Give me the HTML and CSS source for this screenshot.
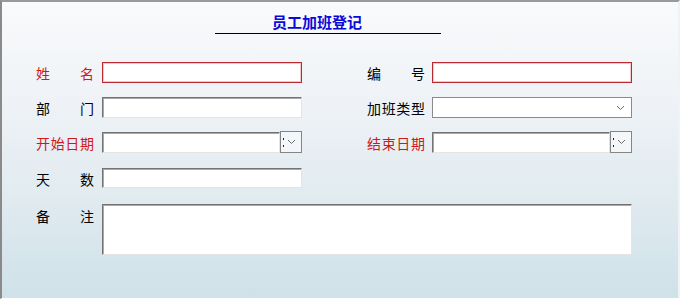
FILE: index.html
```html
<!DOCTYPE html>
<html lang="zh-CN">
<head>
<meta charset="utf-8">
<title>员工加班登记</title>
<link rel="stylesheet" href="styles.css">
</head>
<body>
<div class="window">
  <div class="title">员工加班登记</div>
  <div class="form">
    <label class="lbl req">姓名</label>
    <input class="field req-field" type="text">
    <span></span>
    <label class="lbl">编号</label>
    <input class="field req-field" type="text">

    <label class="lbl">部门</label>
    <input class="field" type="text">
    <span></span>
    <label class="lbl">加班类型</label>
    <div class="select">
      <svg class="chev" width="9" height="6" viewBox="0 0 9 6"><path d="M1 1 L4.5 4.5 L8 1" fill="none" stroke="#6a6a6a" stroke-width="1"/></svg>
    </div>

    <label class="lbl req">开始日期</label>
    <div class="date">
      <input class="field date-input" type="text">
      <div class="date-btn">
        <span class="colon"></span>
        <svg class="chev" width="9" height="6" viewBox="0 0 9 6"><path d="M1 1 L4.5 4.5 L8 1" fill="none" stroke="#6a6a6a" stroke-width="1"/></svg>
      </div>
    </div>
    <span></span>
    <label class="lbl req">结束日期</label>
    <div class="date">
      <input class="field date-input" type="text">
      <div class="date-btn">
        <span class="colon"></span>
        <svg class="chev" width="9" height="6" viewBox="0 0 9 6"><path d="M1 1 L4.5 4.5 L8 1" fill="none" stroke="#6a6a6a" stroke-width="1"/></svg>
      </div>
    </div>

    <label class="lbl">天数</label>
    <input class="field short" type="text">
    <span></span><span></span><span></span>

    <label class="lbl top">备注</label>
    <textarea class="field memo"></textarea>
  </div>
</div>
</body>
</html>
```
FILE: styles.css
```css
html, body {
  margin: 0;
  padding: 0;
}
body {
  font-family: "Noto Sans CJK SC", "Noto Sans", sans-serif;
}
.window {
  box-sizing: border-box;
  width: 680px;
  height: 299px;
  border-top: 2px solid #9a9a9a;
  border-left: 2px solid #8a8a8a;
  border-right: 2px solid #eef3f6;
  border-bottom: 1px solid #ffffff;
  background: linear-gradient(to bottom, #f9fafb 0%, #eef2f6 35%, #e1ebf0 65%, #cfe1e9 100%);
}
.title {
  box-sizing: border-box;
  width: 226px;
  height: 24px;
  margin: 8px 0 0 213px;
  padding-left: 57px;
  border-bottom: 1px solid #000;
  font-size: 15px;
  line-height: 23px;
  font-weight: bold;
  color: #0a0ad8;
}
.form {
  display: grid;
  grid-template-columns: 66px 200px 65px 65px 200px;
  grid-template-rows: 21px 21px 22px 22px 51px;
  row-gap: 14px;
  margin-top: 28px;
  padding-left: 34px;
}
.lbl {
  width: 58px;
  font-size: 14px;
  line-height: 20px;
  color: #000;
  text-align: justify;
  text-align-last: justify;
  align-self: center;
}
.lbl.req {
  color: #d01818;
}
.lbl.top {
  align-self: start;
  padding-top: 2px;
}
.field {
  box-sizing: border-box;
  margin: 0;
  padding: 0;
  width: 200px;
  height: 21px;
  background: #fff;
  border: 1px solid;
  border-color: #737373 #e4e4e4 #e4e4e4 #737373;
  box-shadow: inset 1px 1px 0 #a8a8a8;
  outline: none;
  font: inherit;
}
.req-field {
  border: 1px solid #bb2a30;
  box-shadow: inset 0 0 0 1px #f0c8c8;
}
.short {
  height: 20px;
}
.memo {
  grid-column: 2 / 6;
  width: 530px;
  height: 51px;
  resize: none;
}
.select {
  box-sizing: border-box;
  width: 200px;
  height: 21px;
  background: #fff;
  border: 1px solid #8a8a8a;
  display: flex;
  align-items: center;
  justify-content: flex-end;
  padding-right: 6px;
}
.date {
  display: flex;
  width: 200px;
  height: 21px;
}
.date-input {
  width: 178px;
}
.date-btn {
  box-sizing: border-box;
  width: 22px;
  height: 22px;
  margin-top: -1px;
  border: 1px solid #858585;
  background: #f4f7f9;
  display: flex;
  align-items: center;
  padding-left: 2px;
  gap: 3px;
}
.colon {
  width: 1px;
  height: 9px;
  background: linear-gradient(to bottom, #222 0, #222 2px, transparent 2px, transparent 7px, #222 7px, #222 9px);
}
.chev {
  display: block;
}
```
